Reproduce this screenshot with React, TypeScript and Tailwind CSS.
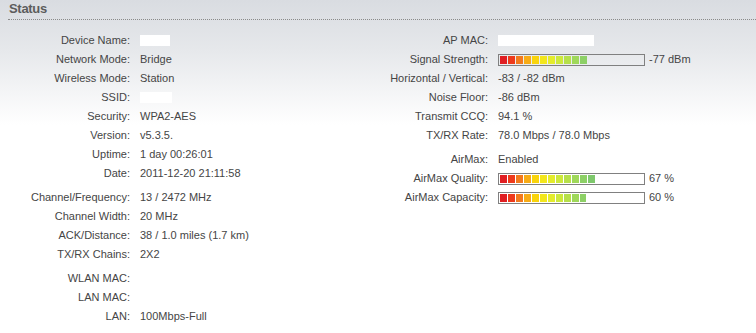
import React from "react";

const segColors = [
  "#e01e22",
  "#ee3a1c",
  "#f27a1e",
  "#f7ac16",
  "#f9d40c",
  "#f3e61c",
  "#e4ec2c",
  "#cde83c",
  "#b6e04a",
  "#9fd85a",
  "#8dd066",
  "#7ec86c",
  "#72c070",
  "#68b872",
  "#60b074",
  "#58a874",
  "#52a074",
  "#4c9874",
];

function Bar({ pct, label }: { pct: number; label: string }) {
  return (
    <div className="flex items-center gap-[4px]">
      <div className="w-[147px] h-[12px] border border-[#808080] p-[1px]">
        <div className="h-full overflow-hidden" style={{ width: `${pct}%` }}>
          <div className="flex gap-[1px] h-full w-[150px]">
            {segColors.map((c, i) => (
              <div key={i} className="w-[7px] h-full shrink-0" style={{ background: c }} />
            ))}
          </div>
        </div>
      </div>
      <span>{label}</span>
    </div>
  );
}

type Row = { label: string; value: React.ReactNode; gap?: boolean };

const blank = (w: number) => <span className="inline-block bg-white h-[11px]" style={{ width: w }} />;

const left: Row[] = [
  { label: "Device Name:", value: blank(30) },
  { label: "Network Mode:", value: "Bridge" },
  { label: "Wireless Mode:", value: "Station" },
  { label: "SSID:", value: blank(32) },
  { label: "Security:", value: "WPA2-AES" },
  { label: "Version:", value: "v5.3.5." },
  { label: "Uptime:", value: "1 day 00:26:01" },
  { label: "Date:", value: "2011-12-20 21:11:58" },
  { label: "Channel/Frequency:", value: "13 / 2472 MHz", gap: true },
  { label: "Channel Width:", value: "20 MHz" },
  { label: "ACK/Distance:", value: "38 / 1.0 miles (1.7 km)" },
  { label: "TX/RX Chains:", value: "2X2" },
  { label: "WLAN MAC:", value: "", gap: true },
  { label: "LAN MAC:", value: "" },
  { label: "LAN:", value: "100Mbps-Full" },
];

const right: Row[] = [
  { label: "AP MAC:", value: blank(96) },
  { label: "Signal Strength:", value: <Bar pct={61} label="-77 dBm" /> },
  { label: "Horizontal / Vertical:", value: "-83 / -82 dBm" },
  { label: "Noise Floor:", value: "-86 dBm" },
  { label: "Transmit CCQ:", value: "94.1 %" },
  { label: "TX/RX Rate:", value: "78.0 Mbps / 78.0 Mbps" },
  { label: "AirMax:", value: "Enabled", gap: true },
  { label: "AirMax Quality:", value: <Bar pct={67} label="67 %" /> },
  { label: "AirMax Capacity:", value: <Bar pct={60} label="60 %" /> },
];

function Column({ rows, labelW }: { rows: Row[]; labelW: string }) {
  return (
    <div className="flex flex-col">
      {rows.map((r) => (
        <div key={r.label} className={`flex items-center h-[19px] ${r.gap ? "mt-[5px]" : ""}`}>
          <div className={`${labelW} text-right shrink-0`}>{r.label}</div>
          <div className="pl-[10px] flex items-center">{r.value}</div>
        </div>
      ))}
    </div>
  );
}

export default function App() {
  return (
    <div
      className="w-[756px] h-[333px] overflow-hidden bg-[linear-gradient(to_bottom,#d9dce1_0px,#e6e8eb_50px,#ffffff_125px)] text-[11px] text-[#454545]"
      style={{ fontFamily: '"Liberation Sans", Arial, sans-serif' }}
    >
      <div className="ml-[8px] h-[20px] border-b border-dotted border-[#8a8a8a] flex items-end">
        <span className="text-[13px] font-bold text-[#5c5c5c] tracking-[-0.3px] leading-[16px] pb-[2px] pl-[1px]">
          Status
        </span>
      </div>
      <div className="flex pt-[11px] relative">
        <div className="w-[380px]">
          <Column rows={left} labelW="w-[130px]" />
        </div>
        <div>
          <Column rows={right} labelW="w-[108px]" />
        </div>
        <div className="absolute left-[137px] top-[244px] w-[104px] h-[42px] bg-white/60" />
      </div>
    </div>
  );
}
